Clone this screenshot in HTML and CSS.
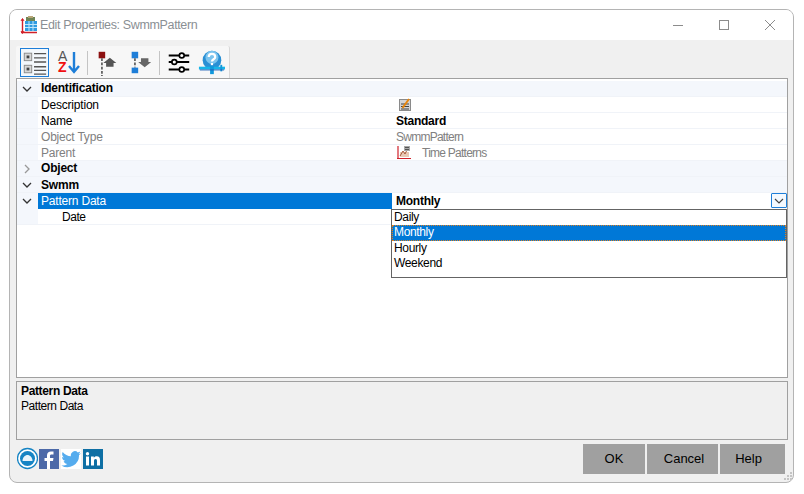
FILE: index.html
```html
<!DOCTYPE html>
<html lang="en">
<head>
<meta charset="utf-8">
<title>Edit Properties: SwmmPattern</title>
<link rel="stylesheet" href="styles.css">
</head>
<body>
<div class="window">
  <header class="titlebar">
    <svg class="app-icon" width="18" height="19" viewBox="0 0 18 19">
      <rect x="6" y="1" width="9" height="5" fill="#6f8455"/>
      <rect x="8" y="0" width="5" height="2" fill="#b9a678"/>
      <rect x="5" y="5" width="12" height="10" fill="#2f9be0"/>
      <path d="M5 8.500h12M5 11.500h12M9 5v10M13 5v10" stroke="#bfe6fa" stroke-width="1"/>
      <path d="M2.500 3v14M1 16.500h16" fill="none" stroke="#d0202a" stroke-width="1.400"/>
      <path d="M1 5l1.500-2.500L4 5M1 15l1.500 2.500L4 15" fill="none" stroke="#d0202a"/>
    </svg>
    <span class="title">Edit Properties: SwmmPattern</span>
    <div class="win-controls">
      <svg width="12" height="12" viewBox="0 0 12 12"><path d="M1 6.500h10" stroke="#8c8c8c"/></svg>
      <svg width="12" height="12" viewBox="0 0 12 12"><rect x="1.500" y="1.500" width="9" height="9" fill="none" stroke="#8c8c8c"/></svg>
      <svg width="12" height="12" viewBox="0 0 12 12"><path d="M1 1l10 10M11 1L1 11" stroke="#8c8c8c"/></svg>
    </div>
  </header>
  <div class="body">
    <div class="toolbar">
      <button class="tool active">
        <svg width="29" height="29" viewBox="0 0 29 29">
          <rect x="3.500" y="4.500" width="8" height="8" fill="#d8d8d8" stroke="#8a8a8a"/><rect x="6" y="7" width="3" height="3" fill="#444"/>
          <rect x="3.500" y="17.500" width="8" height="8" fill="#d8d8d8" stroke="#8a8a8a"/><rect x="6" y="20" width="3" height="3" fill="#444"/>
          <path d="M14 5h13M14 9.500h13M14 14h13M14 19h13M14 23h13M14 27h13" stroke="#555" stroke-width="1.500"/>
        </svg>
      </button>
      <button class="tool az">
        <span class="az-text">A<br><b>Z</b></span>
        <svg class="az-arrow" width="12" height="22" viewBox="0 0 12 22"><path d="M6 0v20M1 14l5 6 5-6" fill="none" stroke="#1e7ed8" stroke-width="2.400"/></svg>
      </button>
      <span class="sep sep-first"></span>
      <button class="tool">
        <svg width="29" height="29" viewBox="0 0 29 29">
          <rect x="5" y="3" width="7" height="7" fill="#8c1010"/>
          <path d="M8.500 10v19" stroke="#666" stroke-width="2" stroke-dasharray="3 1.500"/>
          <path d="M10 15l7-5.500 7 5.500h-3v4h-8v-4z" fill="#555"/>
        </svg>
      </button>
      <button class="tool">
        <svg width="29" height="29" viewBox="0 0 29 29">
          <rect x="5" y="3" width="7" height="7" fill="#1e7ed8"/>
          <path d="M8.500 10v10" stroke="#666" stroke-width="2" stroke-dasharray="3 1.500"/>
          <rect x="5" y="20" width="7" height="6" fill="#1e7ed8"/>
          <path d="M12 14l7 5.500 7-5.500h-3v-4h-8v4z" fill="#666"/>
        </svg>
      </button>
      <span class="sep"></span>
      <button class="tool">
        <svg width="29" height="29" viewBox="0 0 29 29">
          <path d="M4 7h22M4 14h22M4 22h22" stroke="#000" stroke-width="2"/>
          <circle cx="18" cy="7" r="2.600" fill="#fff" stroke="#000" stroke-width="1.800"/>
          <circle cx="10" cy="14" r="2.600" fill="#fff" stroke="#000" stroke-width="1.800"/>
          <circle cx="18" cy="22" r="2.600" fill="#fff" stroke="#000" stroke-width="1.800"/>
        </svg>
      </button>
      <button class="tool">
        <svg width="29" height="29" viewBox="0 0 29 29">
          <circle cx="15" cy="12" r="10" fill="#2a8fd4"/>
          <circle cx="15" cy="9" r="7" fill="#7cc4ee"/>
          <path d="M11.500 8.500c0-4.500 7-4.500 7 0 0 2.500-3.500 2.500-3.500 5" fill="none" stroke="#fff" stroke-width="2.400"/>
          <rect x="13.800" y="15" width="2.400" height="2.400" fill="#fff"/>
          <rect x="1" y="19" width="28" height="3" fill="#18b4e8"/>
          <rect x="13" y="18" width="4" height="9" fill="#1098dc"/>
          <rect x="24" y="17" width="2" height="7" fill="#1098dc"/>
          <rect x="2" y="22" width="26" height="1" fill="#1e60b8"/>
        </svg>
      </button>
    </div>

    <div class="grid">
      <div class="row category">
        <span class="gutter"><svg width="10" height="6" viewBox="0 0 10 6"><path d="M1 1l4 4 4-4" fill="none" stroke="#333" stroke-width="1.300"/></svg></span>
        <span class="name lift">Identification</span>
      </div>
      <div class="row">
        <span class="gutter"></span>
        <span class="name">Description</span>
        <span class="value">
          <svg class="prop-icon" width="12" height="13" viewBox="0 0 12 13"><rect x=".5" y="1.500" width="11" height="11" fill="#d4d4d4" stroke="#8a8a8a"/><path d="M2 6h8M2 8.500h8M2 11h8" stroke="#444"/><path d="M10 1L3.500 10" stroke="#e8860c" stroke-width="2"/></svg>
        </span>
      </div>
      <div class="row">
        <span class="gutter"></span>
        <span class="name">Name</span>
        <span class="value strong">Standard</span>
      </div>
      <div class="row muted">
        <span class="gutter"></span>
        <span class="name">Object Type</span>
        <span class="value tight">SwmmPattern</span>
      </div>
      <div class="row muted">
        <span class="gutter"></span>
        <span class="name">Parent</span>
        <span class="value tight">
          <svg class="parent-icon" width="14" height="15" viewBox="0 0 14 15"><path d="M1 1v13M0 13.500h14" fill="none" stroke="#d0202a" stroke-width="1.200"/><rect x="3" y="7" width="9" height="5" fill="#e8c8b4"/><path d="M3 11l3-5 2 3 3-6" fill="none" stroke="#a85a3a"/><rect x="7" y="1" width="6" height="5" fill="#a8a8a8"/><path d="M8 2.500h4M8 4.500h4" stroke="#555"/></svg>
          <span class="parent-text">Time Patterns</span>
        </span>
      </div>
      <div class="row category">
        <span class="gutter"><svg width="6" height="10" viewBox="0 0 6 10"><path d="M1 1l4 4-4 4" fill="none" stroke="#999" stroke-width="1.300"/></svg></span>
        <span class="name lift">Object</span>
      </div>
      <div class="row category">
        <span class="gutter"><svg width="10" height="6" viewBox="0 0 10 6"><path d="M1 1l4 4 4-4" fill="none" stroke="#333" stroke-width="1.300"/></svg></span>
        <span class="name">Swmm</span>
      </div>
      <div class="row selected">
        <span class="gutter"><svg width="10" height="6" viewBox="0 0 10 6"><path d="M1 1l4 4 4-4" fill="none" stroke="#333" stroke-width="1.300"/></svg></span>
        <span class="name">Pattern Data</span>
        <span class="value strong">Monthly
          <span class="drop-btn"><svg width="10" height="6" viewBox="0 0 10 6"><path d="M1 1l4 4 4-4" fill="none" stroke="#444" stroke-width="1.200"/></svg></span>
        </span>
      </div>
      <div class="row">
        <span class="gutter"></span>
        <span class="name child">Date</span>
      </div>
      <ul class="dropdown">
        <li>Daily</li>
        <li class="current">Monthly</li>
        <li>Hourly</li>
        <li>Weekend</li>
      </ul>
    </div>

    <div class="help">
      <strong>Pattern Data</strong>
      <span>Pattern Data</span>
    </div>

    <footer class="footer">
      <div class="social">
        <svg width="21" height="23" viewBox="0 0 21 23"><circle cx="10.500" cy="11.500" r="10" fill="#fff" stroke="#1684c4" stroke-width="1.300"/><circle cx="10.500" cy="11.500" r="7.500" fill="#1684c4"/><path d="M5.500 14c0-4 3-6 5-6s5 2 5 6z" fill="#e8f4fb"/></svg>
        <span class="soc fb"><svg width="20" height="20" viewBox="0 0 20 20"><rect width="20" height="20" fill="#4c69a8"/><path d="M11 20v-8h3l.5-3H11V7c0-1 .4-1.500 1.600-1.500h1.900V2.600C14 2.500 13 2.400 12 2.400 9.700 2.400 8 3.800 8 6.500V9H5.500v3H8v8z" fill="#fff"/></svg></span>
        <span class="soc"><svg width="20" height="20" viewBox="0 0 20 20"><rect width="20" height="20" fill="#fff"/><path d="M20 4.200c-.8.300-1.500.5-2.400.6.900-.5 1.500-1.300 1.800-2.300-.8.500-1.700.8-2.600 1A4 4 0 0 0 10 7.300C6.700 7.100 3.700 5.500 1.700 3c-1.100 1.900-.5 4.300 1.300 5.500-.7 0-1.300-.2-1.900-.5 0 2 1.400 3.700 3.300 4.100-.6.100-1.200.2-1.800.1.500 1.600 2 2.800 3.800 2.800A8.300 8.300 0 0 1 .3 16.400 11.600 11.600 0 0 0 18 6c.8-.5 1.500-1.100 2-1.800z" fill="#55acee"/></svg></span>
        <span class="soc last"><svg width="20" height="20" viewBox="0 0 20 20"><rect width="20" height="20" fill="#0e6fa4"/><rect x="3" y="7.500" width="3" height="9" fill="#fff"/><circle cx="4.500" cy="4.700" r="1.700" fill="#fff"/><path d="M8 7.500h2.800v1.300c.5-.9 1.500-1.500 2.900-1.500 2.500 0 3.300 1.600 3.300 4v5.200h-3v-4.600c0-1.200-.3-2-1.400-2s-1.600.9-1.600 2v4.600h-3z" fill="#fff"/></svg></span>
      </div>
      <div class="buttons">
        <button class="btn ok">OK</button>
        <button class="btn cancel">Cancel</button>
        <button class="btn help-btn">Help</button>
      </div>
    </footer>
  </div>
  <svg class="grip" width="10" height="9" viewBox="0 0 10 9">
    <path d="M7 0h2v2H7zM4 3h2v2H4zM7 3h2v2H7zM1 6h2v2H1zM4 6h2v2H4zM7 6h2v2H7z" fill="#c4c4c4"/>
  </svg>
</div>
</body>
</html>
```
FILE: styles.css
```css
* { box-sizing: border-box; }
html, body { margin: 0; padding: 0; background: #fff; }
body { width: 804px; height: 494px; padding: 9px 10px 11px 9px; font-family: "Liberation Sans", Arial, sans-serif; font-size: 12px; color: #000; overflow: hidden; }
.window { position: relative; width: 785px; height: 474px; border: 1px solid #b4b4b4; border-radius: 8px; overflow: hidden; display: flex; flex-direction: column; background: #f0f0f0; }
.titlebar { height: 30px; flex: none; background: #fff; display: flex; align-items: center; padding-left: 10px; }
.app-icon { margin-right: 2px; flex: none; }
.title { color: #8a8f94; font-size: 12.500px; letter-spacing: -.36px; }
.win-controls { margin-left: auto; display: flex; gap: 34px; padding-right: 17px; }
.body { flex: 1; display: flex; flex-direction: column; padding: 6px 5px 0 6px; min-height: 0; }
.toolbar { height: 32px; width: 214px; flex: none; display: flex; align-items: flex-start; gap: 4px; background: #f7f7f7; padding: 2px 3px 0 4px; border-radius: 2px 2px 0 0; border-right: 1px solid #d8d8d8; }
.tool { width: 29px; height: 29px; flex: none; padding: 0; border: 1px solid transparent; background: transparent; display: flex; align-items: center; justify-content: center; position: relative; }
.tool.active { border: 1px solid #1e7ed8; background: #f4f8fc; }
.az-text { position: absolute; left: 4px; top: 2px; color: #555; font: 14px/11px "Liberation Sans", sans-serif; text-align: left; }
.az-text b { color: #f01010; font-weight: 700; }
.az-arrow { position: absolute; left: 14px; top: 3px; }
.sep { width: 1px; height: 24px; margin-top: 3px; background: #c4c4c4; flex: none; }
.sep-first { margin-left: 1px; margin-right: 1px; }
.grid { position: relative; flex: none; height: 300px; background: #fff; border: 1px solid #a0a0a0; padding-top: 2px; }
.row { height: 16px; display: flex; align-items: center; border-bottom: 1px solid #f0f3f8; }
.gutter { width: 21px; height: 100%; flex: none; background: #f4f7fc; display: flex; align-items: center; justify-content: center; padding-right: 2px; }
.name { width: 354px; flex: none; padding-left: 3px; white-space: nowrap; letter-spacing: -.2px; }
.name.child { padding-left: 24px; letter-spacing: -.45px; }
.lift { padding-bottom: 2px; }
.value { flex: 1; display: flex; align-items: center; padding-left: 4px; position: relative; height: 100%; white-space: nowrap; letter-spacing: -.2px; }
.tight { letter-spacing: -.75px; }
.strong { font-weight: 700; letter-spacing: -.25px; }
.category { background: #f4f7fc; }
.category .name { font-weight: 700; color: #000; }
.muted .name, .muted .value { color: #808080; }
.selected { border-bottom: 0; }
.selected .name { background: #0078d7; color: #fff; height: 100%; display: flex; align-items: center; }
.prop-icon { margin-left: 3px; }
.parent-icon { margin-left: 1px; flex: none; }
.parent-text { margin-left: 11px; }
.drop-btn { position: absolute; right: 0; top: 0; width: 16px; height: 15px; border: 1px solid #1e7ed8; border-radius: 1px; background: #f4f9fe; display: flex; align-items: center; justify-content: center; }
.dropdown { position: absolute; left: 374px; top: 130px; width: 396px; height: 69px; margin: 0; padding: 0; list-style: none; background: #fff; border: 1px solid #646464; }
.dropdown li { height: 15.330px; line-height: 15px; padding-left: 2px; letter-spacing: -.35px; }
.dropdown .current { background: #0078d7; color: #fff; outline: 1px dotted #e08020; outline-offset: -1px; }
.help { flex: none; height: 59px; margin-top: 3px; border: 1px solid #a0a0a0; background: #f0f0f0; padding: 2px 4px; display: flex; flex-direction: column; gap: 1px; }
.help strong { letter-spacing: -.35px; }
.help span { letter-spacing: -.45px; }
.footer { flex: 1; display: flex; align-items: flex-start; justify-content: space-between; padding: 4px 3px 0 0; }
.social { display: flex; align-items: center; margin-top: 3px; padding-left: 1px; }
.soc { width: 22px; height: 20px; display: block; }
.soc svg { display: block; }
.soc.last { width: 20px; }
.fb { margin-left: 1px; }
.buttons { display: flex; gap: 2px; }
.btn { height: 30px; border: 0; background: #a0a0a0; color: #000; font: 13px "Liberation Sans", sans-serif; padding: 0 0 2px; }
.ok { width: 62px; }
.cancel { width: 71px; padding-left: 3px; }
.help-btn { width: 65px; padding-right: 8px; }
.grip { position: absolute; right: 0; bottom: 1px; }
```
